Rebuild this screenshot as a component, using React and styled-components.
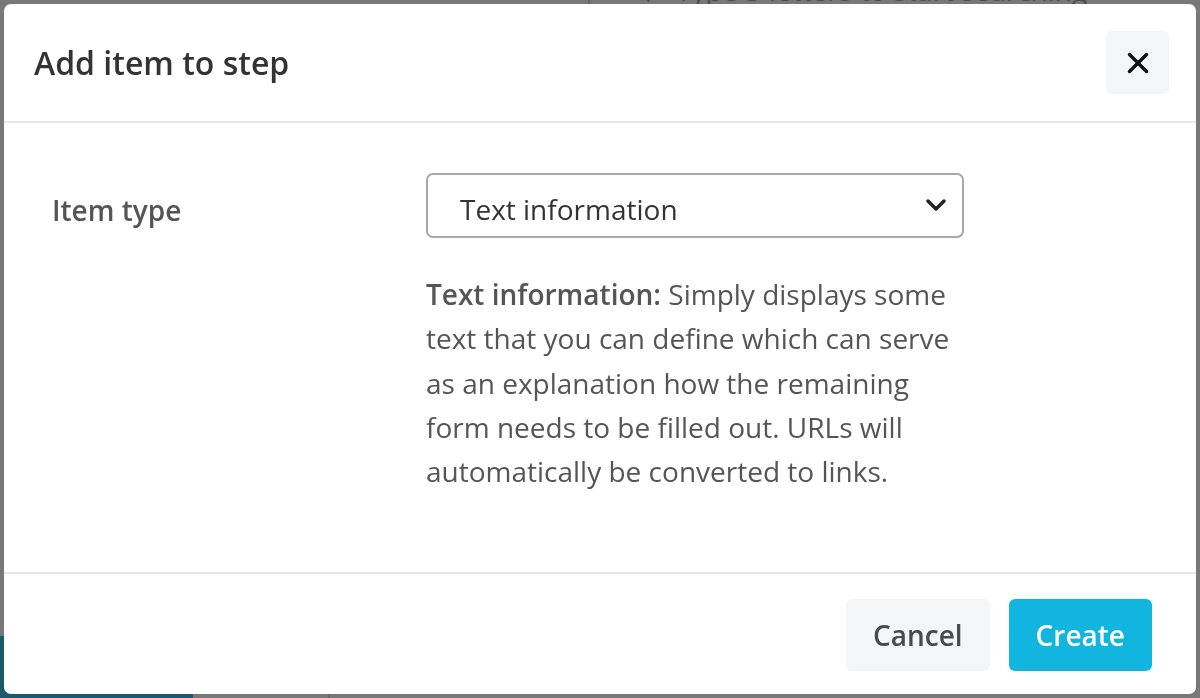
import React from "react"
import styled, { createGlobalStyle } from "styled-components"
import { ChevronDown, X, Search } from "lucide-react"

const GlobalStyle = createGlobalStyle`
  html, body {
    margin: 0;
    padding: 0;
    height: 100%;
    overflow: hidden;
  }
  body {
    font-family: "Open Sans", "Noto Sans", sans-serif;
    background: #f0f0f0;
  }
  #root {
    height: 100%;
  }
`

// page behind the dialog
const Page = styled.div`
  height: 100%;
  display: grid;
  grid-template-columns: 193px 137px 1fr;
  grid-template-rows: 1fr 62px;
`
const TopBar = styled.div`
  grid-column: 1 / -1;
  display: flex;
  align-items: flex-start;
  margin-top: -26px;
  padding-left: 588px;
`
const SearchBox = styled.div`
  display: flex;
  align-items: center;
  gap: 24px;
  height: 32px;
  padding-left: 34px;
  border-left: 2px solid #c8c8c8;
  font-size: 28px;
  color: #999;
`
const SideNav = styled.div`
  grid-row: 2;
  background: #36b4d6;
`
const SubNav = styled.div`
  grid-row: 2;
  border-right: 2px solid #d0d0d0;
`

const Overlay = styled.div`
  position: fixed;
  inset: 0;
  background: rgba(0, 0, 0, 0.5);
  padding: 4px;
  box-sizing: border-box;
  display: flex;
`
const Dialog = styled.div`
  flex: 1;
  display: flex;
  flex-direction: column;
  background: #fff;
  border-radius: 7px;
  overflow: hidden;
`
const Header = styled.div`
  height: 117px;
  display: flex;
  align-items: center;
  justify-content: space-between;
  padding: 0 27px 0 30px;
  border-bottom: 2px solid #e6e6e6;
`
const Title = styled.h2`
  margin: 0;
  font-size: 32px;
  font-weight: 600;
  color: #333;
`
const CloseButton = styled.button`
  width: 63px;
  height: 63px;
  display: flex;
  align-items: center;
  justify-content: center;
  border: none;
  border-radius: 5px;
  background: #f4f5f7;
  color: #111;
  cursor: pointer;
  padding: 0;
`
const Body = styled.div`
  flex: 1;
  display: grid;
  grid-template-columns: 374px 538px;
  align-content: start;
  padding: 50px 48px 0 48px;
`
const Label = styled.label`
  font-size: 28px;
  font-weight: 600;
  color: #555;
  height: 65px;
  display: flex;
  align-items: center;
  padding-top: 8px;
  box-sizing: border-box;
`
const Field = styled.div`
  display: flex;
  flex-direction: column;
  gap: 34px;
`
const Select = styled.div`
  height: 65px;
  box-sizing: border-box;
  display: flex;
  align-items: center;
  justify-content: space-between;
  padding: 7px 10px 0 32px;
  border: 2px solid #a8a8a8;
  border-radius: 7px;
  font-size: 28px;
  color: #333;

  svg {
    margin-top: -8px;
  }
`
const Description = styled.p`
  margin: 0;
  font-size: 28px;
  line-height: 44.3px;
  color: #555;
  width: 530px;
`
const Strong = styled.b`
  font-weight: 600;
`
const Footer = styled.div`
  height: 122px;
  box-sizing: border-box;
  display: flex;
  align-items: center;
  justify-content: flex-end;
  gap: 19px;
  padding: 2px 44px 0 0;
  border-top: 2px solid #e6e6e6;
`
const Button = styled.button`
  height: 72px;
  padding: 0 27px;
  border: none;
  border-radius: 6px;
  font-family: inherit;
  font-size: 28px;
  font-weight: 600;
  cursor: pointer;
  background: ${p => (p.$primary ? "#12b5de" : "#f4f5f7")};
  color: ${p => (p.$primary ? "#fff" : "#4a4a4a")};
`

const App = () => {
  return (
    <>
      <GlobalStyle />
      <Page>
        <TopBar>
          <SearchBox>
            <Search size={28} color="#999" />
            Type 3 letters to start searching
          </SearchBox>
        </TopBar>
        <SideNav />
        <SubNav />
      </Page>
      <Overlay>
        <Dialog>
          <Header>
            <Title>Add item to step</Title>
            <CloseButton aria-label="Close">
              <X size={34} strokeWidth={2.4} />
            </CloseButton>
          </Header>
          <Body>
            <Label>Item type</Label>
            <Field>
              <Select>
                Text information
                <ChevronDown size={32} strokeWidth={2.6} color="#222" />
              </Select>
              <Description>
                <Strong>Text information:</Strong> Simply displays some text
                that you can define which can serve as an explanation how the
                remaining form needs to be filled out. URLs will automatically
                be converted to links.
              </Description>
            </Field>
          </Body>
          <Footer>
            <Button>Cancel</Button>
            <Button $primary>Create</Button>
          </Footer>
        </Dialog>
      </Overlay>
    </>
  )
}

export default App
